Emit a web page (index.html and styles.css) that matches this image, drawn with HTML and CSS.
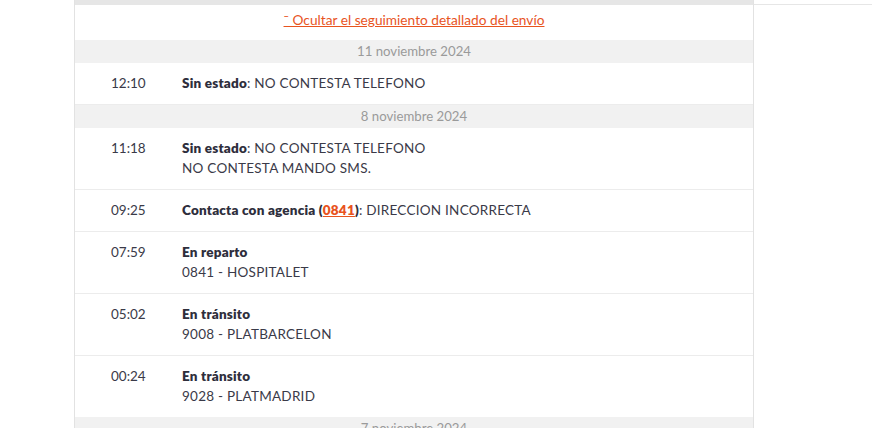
FILE: index.html
```html
<!DOCTYPE html>
<html lang="es">
<head>
<meta charset="utf-8">
<title>Seguimiento</title>
<link rel="stylesheet" href="styles.css">
</head>
<body>
<div class="page">
  <div class="panel">
    <div class="topbar"></div>
    <div class="toggle"><a href="#" class="toggle-link">ˉ Ocultar el seguimiento detallado del envío</a></div>
    <div class="date">11 noviembre 2024</div>
    <div class="event">
      <div class="time">12:10</div>
      <div class="desc"><b>Sin estado</b>: NO CONTESTA TELEFONO</div>
    </div>
    <div class="date">8 noviembre 2024</div>
    <div class="event">
      <div class="time">11:18</div>
      <div class="desc"><b>Sin estado</b>: NO CONTESTA TELEFONO<br>NO CONTESTA MANDO SMS.</div>
    </div>
    <div class="event">
      <div class="time">09:25</div>
      <div class="desc"><b>Contacta con agencia (<a href="#" class="agency">0841</a>)</b>: DIRECCION INCORRECTA</div>
    </div>
    <div class="event">
      <div class="time">07:59</div>
      <div class="desc"><b>En reparto</b><br>0841 - HOSPITALET</div>
    </div>
    <div class="event">
      <div class="time">05:02</div>
      <div class="desc"><b>En tránsito</b><br>9008 - PLATBARCELON</div>
    </div>
    <div class="event last">
      <div class="time">00:24</div>
      <div class="desc"><b>En tránsito</b><br>9028 - PLATMADRID</div>
    </div>
    <div class="date">7 noviembre 2024</div>
  </div>
  <div class="side"></div>
</div>
</body>
</html>
```
FILE: styles.css
```css
html, body {
  margin: 0;
  padding: 0;
  background: #ffffff;
}
body {
  font-family: Lato, "Noto Sans", sans-serif;
  font-size: 13.5px;
  color: #3a3a48;
  overflow: hidden;
  height: 428px;
}
.page {
  display: flex;
  padding-left: 74px;
}
.panel {
  width: 678px;
  border-left: 1px solid #e2e2e2;
  border-right: 1px solid #e2e2e2;
  display: flex;
  flex-direction: column;
}
.side {
  flex: 1;
  height: 4px;
  border-bottom: 1px solid #e6e6e6;
}
.topbar {
  height: 5px;
  background: #e6e6e6;
}
.toggle {
  height: 35px;
  box-sizing: border-box;
  padding-top: 5px;
  text-align: center;
  line-height: 20px;
}
.toggle-link {
  color: #e8541e;
  text-decoration: underline;
  font-size: 13.7px;
}
.date {
  height: 23px;
  line-height: 23px;
  background: #f1f1f1;
  color: #9a9a9a;
  text-align: center;
  font-size: 13.2px;
}
.event {
  display: flex;
  padding: 10px 0 11px;
  line-height: 20px;
  border-bottom: 1px solid #ececec;
}
.event.last {
  border-bottom: none;
  padding-bottom: 11px;
}
.time {
  width: 71px;
  padding-left: 36px;
  flex: none;
}
.desc {
  letter-spacing: 0.25px;
}
.desc b {
  font-weight: 800;
  color: #2e2e3c;
  letter-spacing: 0.2px;
}
.agency {
  color: #e8541e;
  text-decoration: underline;
}
```
